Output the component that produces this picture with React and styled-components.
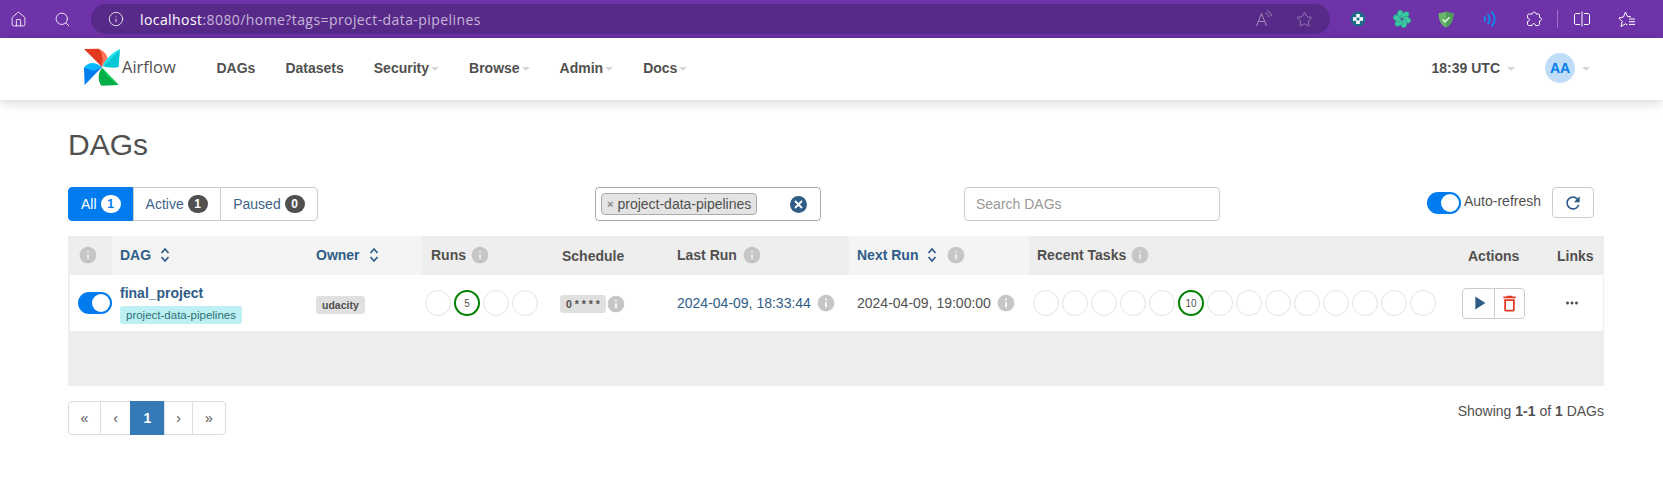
import React from "react"
import styled, { createGlobalStyle } from "styled-components"
import { Home, Search, Info, Star } from "lucide-react"
import {
  MdInfo,
  MdRefresh,
  MdPlayArrow,
  MdDeleteOutline,
  MdMoreHoriz,
} from "react-icons/md"

const GlobalStyle = createGlobalStyle`
  html, body {
    margin: 0;
    padding: 0;
    background: #fff;
    font-family: "Liberation Sans", Arial, sans-serif;
    font-size: 14px;
    color: #51504f;
  }
  * { box-sizing: border-box; }
`

const BrowserBar = styled.div`
  display: flex;
  align-items: center;
  height: 38px;
  background: #6e33a9;
  color: #fff;
`

const BarIcon = styled.span`
  display: flex;
  align-items: center;
  justify-content: center;
  width: ${props => props.$width || 44}px;
  height: 30px;
  color: ${props => props.$color || "#fff"};
  flex: none;
`

const Divider = styled.span`
  width: 1px;
  height: 18px;
  margin-left: 1px;
  background: #9a72c6;
  flex: none;
`

const AddressPill = styled.div`
  display: flex;
  align-items: center;
  width: 1239px;
  height: 30px;
  margin: 0 6px 0 3px;
  padding: 0 6px 0 17px;
  border-radius: 15px;
  background: #572a8a;
  flex: none;
`

const Url = styled.div`
  flex: 1;
  margin-left: 16px;
  font-family: "Open Sans", sans-serif;
  font-size: 14px;
  letter-spacing: 0.03em;
  color: #c6b6d8;
  white-space: nowrap;
  b {
    font-weight: 400;
    color: #fff;
  }
`

const NavBar = styled.header`
  display: flex;
  align-items: center;
  height: 62px;
  padding: 0 73px 4px 80px;
  background: #fff;
  box-shadow: 0 2px 12px rgba(0, 0, 0, 0.18);
  position: relative;
`

const Brand = styled.div`
  display: flex;
  align-items: center;
  width: 121.5px;
  flex: none;
  span {
    margin: -2px 0 0 -2px;
    font-family: "Open Sans", sans-serif;
    font-size: 16.5px;
    color: #51504f;
  }
`

const NavLinks = styled.ul`
  display: flex;
  flex: 1;
  margin: 0;
  padding: 2px 0 0;
  list-style: none;
`

const NavLink = styled.li`
  display: flex;
  align-items: center;
  padding: 0 15px;
  font-weight: 700;
  font-size: 14px;
  white-space: nowrap;
`

const Caret = styled.i`
  width: 0;
  height: 0;
  margin-left: ${props => props.$gap || 2}px;
  margin-top: 2px;
  border-top: 4px solid #dcd3de;
  border-left: 4px solid transparent;
  border-right: 4px solid transparent;
`

const NavRight = styled.div`
  display: flex;
  align-items: center;
  padding-top: 2px;
  font-weight: 700;
  font-size: 14px;
`

const Avatar = styled.span`
  display: flex;
  align-items: center;
  justify-content: center;
  width: 30px;
  height: 30px;
  margin-left: 30px;
  border-radius: 50%;
  background: #bfdcf9;
  color: #017cee;
  font-size: 14px;
`

const Main = styled.main`
  width: 1536px;
  margin-left: 68px;
`

const Title = styled.h2`
  margin: 24px 0 0;
  height: 41px;
  font-size: 30px;
  line-height: 41px;
  font-weight: 400;
  color: #51504f;
`

const Toolbar = styled.div`
  display: grid;
  grid-template-columns: 527px 369px 463px 1fr;
  align-items: start;
  height: 34px;
  margin-top: 22px;
`

const BtnGroup = styled.div`
  display: inline-flex;
  width: max-content;
`

const FilterBtn = styled.a`
  display: flex;
  align-items: center;
  gap: 4px;
  height: 34px;
  padding: 0 ${props => props.$pad || 12}px;
  margin-left: -1px;
  border: 1px solid #ccc;
  font-size: 14px;
  color: ${props => (props.$active ? "#fff" : "#3f6389")};
  background: ${props => (props.$active ? "#017cee" : "#fff")};
  border-color: ${props => (props.$active ? "#017cee" : "#ccc")};
  &:first-child {
    margin-left: 0;
    border-radius: 4px 0 0 4px;
  }
  &:last-child {
    border-radius: 0 4px 4px 0;
  }
`

const Count = styled.span`
  min-width: 20px;
  height: 18px;
  padding: 0 6px;
  border-radius: 10px;
  font-size: 12px;
  line-height: 18px;
  font-weight: 700;
  text-align: center;
  color: ${props => (props.$active ? "#017cee" : "#fff")};
  background: ${props => (props.$active ? "#fff" : "#51504f")};
`

const TagSelect = styled.div`
  display: flex;
  align-items: center;
  justify-content: space-between;
  width: 226px;
  height: 34px;
  padding: 0 13px 0 5px;
  border: 1px solid #aaa;
  border-radius: 4px;
`

const TagChip = styled.span`
  display: flex;
  align-items: center;
  height: 22px;
  padding: 0 5px;
  border: 1px solid #aaa;
  border-radius: 4px;
  background: #e4e4e4;
  font-size: 14px;
  color: #51504f;
  white-space: nowrap;
  em {
    margin-right: 4px;
    font-style: normal;
    font-weight: 700;
    font-size: 11px;
    color: #888;
  }
`

const ClearDot = styled.span`
  display: flex;
  align-items: center;
  justify-content: center;
  width: 17px;
  height: 17px;
  border-radius: 50%;
  background: #2f5d88;
  color: #fff;
`

const SearchBox = styled.div`
  display: flex;
  align-items: center;
  width: 256px;
  height: 34px;
  padding: 0 11px;
  border: 1px solid #ccc;
  border-radius: 4px;
  font-size: 14px;
  color: #999;
`

const RefreshArea = styled.div`
  display: flex;
  align-items: flex-start;
`

const Switch = styled.span`
  position: relative;
  display: block;
  width: 34px;
  height: 22px;
  border-radius: 11px;
  background: #017cee;
  flex: none;
  margin-top: ${props => props.$top || 0}px;
  &::after {
    content: "";
    position: absolute;
    top: 2px;
    right: 2px;
    width: 18px;
    height: 18px;
    border-radius: 50%;
    background: #fff;
  }
`

const RefreshLabel = styled.span`
  margin: 6px 11px 0 3px;
  font-size: 14px;
  line-height: 16px;
  color: #51504f;
`

const RefreshBtn = styled.span`
  display: flex;
  align-items: center;
  justify-content: center;
  width: 42px;
  height: 31px;
  border: 1px solid #ccc;
  border-radius: 4px;
  color: #2f5d88;
`

const TableWrap = styled.div`
  height: 150px;
  margin-top: 15px;
  background: #eee;
  border-radius: 4px 4px 0 0;
`

const Table = styled.table`
  width: 100%;
  table-layout: fixed;
  border-collapse: collapse;
`

const Th = styled.th`
  height: 39px;
  padding: 0 8px;
  text-align: ${props => props.$align || "left"};
  font-size: 14px;
  font-weight: 700;
  white-space: nowrap;
  color: ${props => (props.$sort ? "#2f5d88" : "#51504f")};
  background: ${props => (props.$light ? "#f4f4f4" : "#eee")};
`

const HeadInner = styled.span`
  display: flex;
  align-items: center;
  gap: ${props => props.$gap || 4}px;
  margin-left: ${props => props.$indent || 0}px;
  margin-top: -2px;
`

const Row = styled.tr`
  background: #fff;
  box-shadow: inset 2px 0 0 #eee, inset -1px 0 0 #eee;
`

const Td = styled.td`
  height: 56px;
  padding: ${props => props.$top || 0}px 8px 0;
  font-size: 14px;
  white-space: nowrap;
  text-align: ${props => props.$align || "left"};
`

const CellFlex = styled.div`
  display: flex;
  align-items: center;
  gap: ${props => props.$gap ?? 3}px;
  margin-left: ${props => props.$indent || 0}px;
`

const DagName = styled.a`
  display: block;
  font-weight: 700;
  font-size: 14px;
  line-height: 17px;
  color: #2f5d88;
`

const DagTag = styled.span`
  display: block;
  width: max-content;
  margin-top: 4px;
  height: 18px;
  padding: 0 6px;
  border-radius: 3px;
  background: #bcf0f3;
  color: #2f6f75;
  font-size: 11.5px;
  line-height: 18px;
`

const GrayLabel = styled.span`
  display: inline-block;
  height: 18px;
  padding: 0 6px;
  border-radius: 3px;
  background: #e0e0e0;
  color: #51504f;
  font-size: 10.5px;
  line-height: 18px;
  font-weight: 700;
`

const Circles = styled.div`
  display: flex;
  gap: 3px;
  margin-left: ${props => props.$indent || 0}px;
`

const Circle = styled.span`
  display: flex;
  align-items: center;
  justify-content: center;
  width: 26px;
  height: 26px;
  border-radius: 50%;
  border: ${props => (props.$done ? "2px solid #008000" : "1px solid #e3e3e3")};
  font-size: 10px;
  color: #51504f;
`

const DateText = styled.span`
  color: ${props => props.$color || "#2f5d88"};
`

const ActionGroup = styled.div`
  display: inline-flex;
  height: 31px;
  margin: 0 0 0 -6px;
  border: 1px solid #ccc;
  border-radius: 4px;
`

const ActionBtn = styled.span`
  display: flex;
  align-items: center;
  justify-content: center;
  width: ${props => props.$width}px;
  color: ${props => props.$color};
  & + & {
    border-left: 1px solid #ccc;
  }
`

const Footer = styled.div`
  display: flex;
  align-items: flex-start;
  justify-content: space-between;
  margin-top: 15px;
`

const Pager = styled.ul`
  display: flex;
  height: 34px;
  margin: 0;
  padding: 0;
  list-style: none;
`

const PageItem = styled.li`
  display: flex;
  align-items: center;
  justify-content: center;
  width: ${props => props.$width}px;
  margin-left: -1px;
  border: 1px solid ${props => (props.$active ? "#337ab7" : "#ddd")};
  background: ${props => (props.$active ? "#337ab7" : "#fff")};
  color: ${props => (props.$active ? "#fff" : "#51504f")};
  font-size: 14px;
  &:first-child {
    margin-left: 0;
    border-radius: 4px 0 0 4px;
  }
  &:last-child {
    border-radius: 0 4px 4px 0;
  }
`

const Showing = styled.p`
  margin: 2px 0 0;
  font-size: 14px;
  line-height: 16px;
  color: #51504f;
`

const InfoDot = () => <MdInfo size={20} color="#c6c6c6" style={{ flex: "none" }} />

const Sort = () => (
  <svg width="10" height="16" viewBox="0 0 10 16" fill="none" stroke="currentColor" strokeWidth="1.7">
    <path d="M1.5 6 L5 2 L8.5 6" />
    <path d="M1.5 10 L5 14 L8.5 10" />
  </svg>
)

const Pinwheel = () => (
  <svg width="44" height="44" viewBox="0 0 132 132">
    <path d="M12 12 L56 11 C68 18 72 40 66 66 Z" fill="#e43921" />
    <path d="M56 11 C70 16 84 30 82 42 L66 66 C72 44 68 20 56 11 Z" fill="#ff7557" />
    <path d="M120 12 L116 66 C100 70 84 68 68 64 Z" fill="#00c7d4" />
    <path d="M120 12 L68 64 C74 44 96 24 120 12 Z" fill="#11e1ee" />
    <path d="M116 120 L64 122 C52 104 54 84 66 68 Z" fill="#00ad46" />
    <path d="M66 68 L80 92 L116 120 Z" fill="#04d659" />
    <path d="M14 120 L12 68 C30 58 50 60 66 66 Z" fill="#017cee" />
    <path d="M12 68 C26 50 44 50 66 66 L40 78 Z" fill="#0cb6ff" />
  </svg>
)

const ReadAloud = () => (
  <svg width="18" height="18" viewBox="0 0 18 18" fill="none" stroke="#a08fb8" strokeWidth="1">
    <path d="M1.5 16 L6.5 3.5 L11.5 16 M3.4 11.5 H9.6" />
    <path d="M10.5 3 C12.5 3.5 13.5 5 14 7 M12 0.8 C14.5 1.5 16 3.5 16.5 6" />
  </svg>
)

const CrossDisc = () => (
  <svg width="16" height="16" viewBox="0 0 16 16">
    <circle cx="8" cy="8" r="7.5" fill="#1d6a8a" />
    <rect x="6.2" y="3" width="3.6" height="3.6" fill="#fff" />
    <rect x="6.2" y="9.4" width="3.6" height="3.6" fill="#fff" />
    <rect x="3" y="6.2" width="3.6" height="3.6" fill="#fff" />
    <rect x="9.4" y="6.2" width="3.6" height="3.6" fill="#fff" />
  </svg>
)

const SwirlFlower = () => (
  <svg width="18" height="18" viewBox="0 0 18 18">
    {[0, 60, 120, 180, 240, 300].map(a => (
      <ellipse
        key={a}
        cx="7.2"
        cy="4.4"
        rx="2.9"
        ry="4.2"
        fill="#3ec6a2"
        stroke="#1f9f86"
        strokeWidth="0.6"
        transform={`rotate(${a} 9 9)`}
      />
    ))}
    <circle cx="9" cy="9" r="1.5" fill="#6e33a9" opacity="0.5" />
  </svg>
)

const ShieldCheck = () => (
  <svg width="16" height="17" viewBox="0 0 16 17">
    <path d="M8 0.5 C10.5 1.6 13 2 15.5 2 C15.6 9 13 14 8 16.5 C3 14 0.4 9 0.5 2 C3 2 5.5 1.6 8 0.5 Z" fill="#68b56a" />
    <path d="M8 0.5 C10.5 1.6 13 2 15.5 2 C15.6 9 13 14 8 16.5 Z" fill="#4d9e5a" />
    <path d="M4.8 8.5 L7.2 10.8 L11.4 6.2" fill="none" stroke="#dff2dc" strokeWidth="1.6" />
  </svg>
)

const Waves = () => (
  <svg width="14" height="16" viewBox="0 0 14 16" fill="none" stroke="#0f8cf0" strokeWidth="1.8" strokeLinecap="round">
    <path d="M1.5 6 C2.5 7.3 2.5 8.7 1.5 10" />
    <path d="M5 3.5 C7 6.2 7 9.8 5 12.5" />
    <path d="M9 1 C12.4 5.5 12.4 10.5 9 15" />
  </svg>
)

const PuzzlePiece = () => (
  <svg width="16" height="16" viewBox="0 0 16 16" fill="none" stroke="#fff" strokeWidth="1">
    <path d="M3.5 3 H6.2 C6.2 0.5 10 0.5 10 3 H12.5 C13 3 13.5 3.5 13.5 4 V6.5 C16 6.5 16 10 13.5 10 V13 C13.5 14 13 14.5 12 14.5 H9.5 C9.5 12 6 12 6 14.5 H3 C2 14.5 1.5 14 1.5 13 V10.5 C4 10.5 4 7 1.5 7 V4.5 C1.5 3.5 2.5 3 3.5 3 Z" />
  </svg>
)

const SplitView = () => (
  <svg width="16" height="16" viewBox="0 0 16 16" fill="none" stroke="#fff" strokeWidth="1">
    <path d="M6 2.5 H2 C1.2 2.5 0.5 3.2 0.5 4 V12 C0.5 12.8 1.2 13.5 2 13.5 H6" />
    <path d="M10 2.5 H14 C14.8 2.5 15.5 3.2 15.5 4 V12 C15.5 12.8 14.8 13.5 14 13.5 H10" />
    <path d="M8 0.5 V15.5" />
  </svg>
)

const FavList = () => (
  <svg width="18" height="17" viewBox="0 0 18 17" fill="none" stroke="#fff" strokeWidth="1">
    <path d="M7.5 1 L9.4 5.4 L13 5.8 M3 15.5 L4.2 10.4 L0.8 7 L5.5 5.9 L7.5 1 M3 15.5 L7.5 12.8 L9.5 14" />
    <path d="M11 8 H17 M11 10.7 H17 M11 13.4 H17" />
  </svg>
)

const Runs = Array.from({ length: 4 })
const Tasks = Array.from({ length: 14 })

const App = () => (
  <>
    <GlobalStyle />
    <BrowserBar>
      <BarIcon $width={37}><Home size={17} strokeWidth={1.2} /></BarIcon>
      <BarIcon $width={51}><Search size={17} strokeWidth={1.2} /></BarIcon>
      <AddressPill>
        <Info size={16} strokeWidth={1.2} />
        <Url><b>localhost</b>:8080/home?tags=project-data-pipelines</Url>
        <BarIcon $width={40}><ReadAloud /></BarIcon>
        <BarIcon $width={40} $color="#a08fb8"><Star size={17} strokeWidth={1.1} /></BarIcon>
      </AddressPill>
      <BarIcon $width={44}><CrossDisc /></BarIcon>
      <BarIcon $width={44}><SwirlFlower /></BarIcon>
      <BarIcon $width={44}><ShieldCheck /></BarIcon>
      <BarIcon $width={44}><Waves /></BarIcon>
      <BarIcon $width={44}><PuzzlePiece /></BarIcon>
      <Divider />
      <BarIcon $width={47}><SplitView /></BarIcon>
      <BarIcon $width={44}><FavList /></BarIcon>
    </BrowserBar>

    <NavBar>
      <Brand>
        <Pinwheel />
        <span>Airflow</span>
      </Brand>
      <NavLinks>
        <NavLink>DAGs</NavLink>
        <NavLink>Datasets</NavLink>
        <NavLink>Security<Caret /></NavLink>
        <NavLink>Browse<Caret /></NavLink>
        <NavLink>Admin<Caret /></NavLink>
        <NavLink>Docs<Caret /></NavLink>
      </NavLinks>
      <NavRight>
        18:39 UTC<Caret $gap={7} />
        <Avatar>AA</Avatar>
        <Caret $gap={7} />
      </NavRight>
    </NavBar>

    <Main>
      <Title>DAGs</Title>
      <Toolbar>
        <BtnGroup>
          <FilterBtn $active>All <Count $active>1</Count></FilterBtn>
          <FilterBtn>Active <Count>1</Count></FilterBtn>
          <FilterBtn $pad={12.5}>Paused <Count>0</Count></FilterBtn>
        </BtnGroup>
        <TagSelect>
          <TagChip><em>×</em>project-data-pipelines</TagChip>
          <ClearDot>
            <svg width="9" height="9" viewBox="0 0 9 9" stroke="#fff" strokeWidth="1.8">
              <path d="M1 1 L8 8 M8 1 L1 8" />
            </svg>
          </ClearDot>
        </TagSelect>
        <SearchBox>Search DAGs</SearchBox>
        <RefreshArea>
          <Switch $top={5} />
          <RefreshLabel>Auto-refresh</RefreshLabel>
          <RefreshBtn><MdRefresh size={20} /></RefreshBtn>
        </RefreshArea>
      </Toolbar>

      <TableWrap>
        <Table>
          <colgroup>
            <col style={{ width: 44 }} />
            <col style={{ width: 196 }} />
            <col style={{ width: 114 }} />
            <col style={{ width: 132 }} />
            <col style={{ width: 115 }} />
            <col style={{ width: 180 }} />
            <col style={{ width: 180 }} />
            <col style={{ width: 431 }} />
            <col style={{ width: 89 }} />
            <col style={{ width: 55 }} />
          </colgroup>
          <thead>
            <tr>
              <Th><HeadInner $indent={2}><InfoDot /></HeadInner></Th>
              <Th $light $sort><HeadInner $gap={9}>DAG <Sort /></HeadInner></Th>
              <Th $light $sort><HeadInner $gap={9}>Owner <Sort /></HeadInner></Th>
              <Th><HeadInner $indent={1}>Runs <InfoDot /></HeadInner></Th>
              <Th>Schedule</Th>
              <Th><HeadInner $gap={5}>Last Run <InfoDot /></HeadInner></Th>
              <Th $light $sort><HeadInner $gap={9}>Next Run <Sort /> <InfoDot /></HeadInner></Th>
              <Th><HeadInner>Recent Tasks <InfoDot /></HeadInner></Th>
              <Th>Actions</Th>
              <Th>Links</Th>
            </tr>
          </thead>
          <tbody>
            <Row>
              <Td><CellFlex $indent={2}><Switch /></CellFlex></Td>
              <Td $top={2}>
                <DagName>final_project</DagName>
                <DagTag>project-data-pipelines</DagTag>
              </Td>
              <Td $top={4}><GrayLabel>udacity</GrayLabel></Td>
              <Td>
                <Circles $indent={-5}>
                  {Runs.map((_, i) => (
                    <Circle key={i} $done={i === 1}>{i === 1 ? 5 : ""}</Circle>
                  ))}
                </Circles>
              </Td>
              <Td $top={2}>
                <CellFlex $gap={0} $indent={-2}>
                  <GrayLabel>0 * * * *</GrayLabel>
                  <InfoDot />
                </CellFlex>
              </Td>
              <Td>
                <CellFlex $gap={5}>
                  <DateText>2024-04-09, 18:33:44</DateText>
                  <InfoDot />
                </CellFlex>
              </Td>
              <Td>
                <CellFlex $gap={5}>
                  <DateText $color="#51504f">2024-04-09, 19:00:00</DateText>
                  <InfoDot />
                </CellFlex>
              </Td>
              <Td>
                <Circles $indent={-4}>
                  {Tasks.map((_, i) => (
                    <Circle key={i} $done={i === 5}>{i === 5 ? 10 : ""}</Circle>
                  ))}
                </Circles>
              </Td>
              <Td>
                <ActionGroup>
                  <ActionBtn $width={31} $color="#2f5d88"><MdPlayArrow size={22} /></ActionBtn>
                  <ActionBtn $width={30} $color="#e43921"><MdDeleteOutline size={21} /></ActionBtn>
                </ActionGroup>
              </Td>
              <Td><CellFlex $indent={6}><MdMoreHoriz size={18} /></CellFlex></Td>
            </Row>
          </tbody>
        </Table>
      </TableWrap>

      <Footer>
        <Pager>
          <PageItem $width={33}>«</PageItem>
          <PageItem $width={31}>‹</PageItem>
          <PageItem $width={35} $active><b>1</b></PageItem>
          <PageItem $width={29}>›</PageItem>
          <PageItem $width={34}>»</PageItem>
        </Pager>
        <Showing>Showing <b>1-1</b> of <b>1</b> DAGs</Showing>
      </Footer>
    </Main>
  </>
)

export default App
